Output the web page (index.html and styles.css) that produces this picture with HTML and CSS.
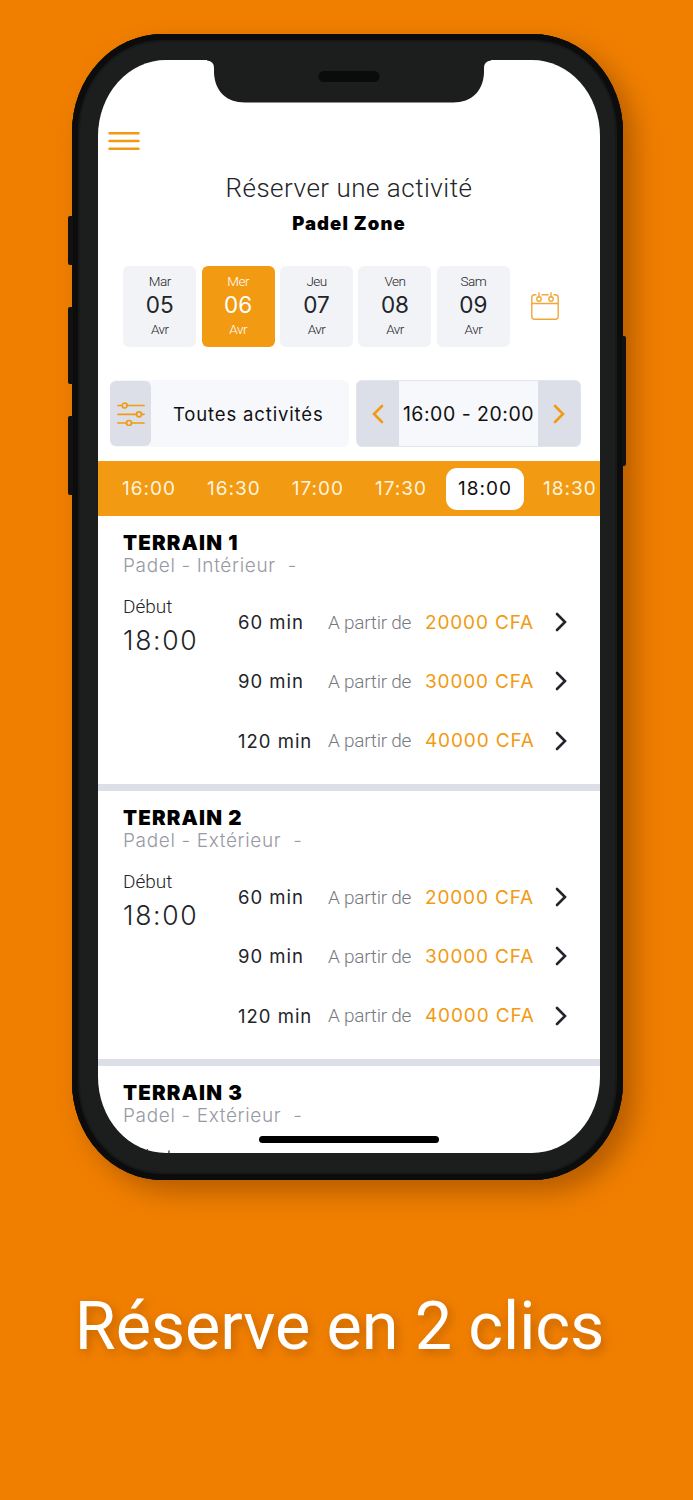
FILE: index.html
```html
<!DOCTYPE html>
<html lang="fr">
<head>
    <meta charset="UTF-8">
    <meta name="viewport" content="width=device-width, initial-scale=1.0">
    <title>Réserver une activité - Padel Zone</title>
    <link rel="stylesheet" href="styles.css">
</head>
<body>
    <div class="phone">
        <span class="side-button mute"></span>
        <span class="side-button volume-up"></span>
        <span class="side-button volume-down"></span>
        <span class="side-button power"></span>
        <svg class="notch" width="284" height="43" viewBox="0 0 284 43">
            <path d="M0 0H284V.5Q277 1 277 8V13C276 31 265 42.500 246 42.500H38C19 42.500 8 31 7 13V8Q7 1 0 .5Z" fill="#1c1d1d"/>
            <rect x="111.500" y="11" width="61" height="11" rx="5.500" fill="#0b0b0b"/>
        </svg>
        <div class="screen">
            <svg class="menu-icon" width="32" height="22" viewBox="0 0 32 22" stroke="#f19a12" stroke-width="2.500" stroke-linecap="round">
                <path d="M1.500 3.300H30.500M1.500 11H30.500M1.500 18.800H30.500"/>
            </svg>
            <h1>Réserver une activité</h1>
            <h2>Padel Zone</h2>

            <div class="days">
                <div class="day"><span>Mar</span><b>05</b><span>Avr</span></div>
                <div class="day active"><span>Mer</span><b>06</b><span>Avr</span></div>
                <div class="day"><span>Jeu</span><b>07</b><span>Avr</span></div>
                <div class="day"><span>Ven</span><b>08</b><span>Avr</span></div>
                <div class="day"><span>Sam</span><b>09</b><span>Avr</span></div>
                <svg class="calendar" width="28" height="28" viewBox="0 0 28 28" fill="none" stroke="#f3a73a" stroke-width="1.400">
                    <path d="M5.500 2.800H3.500A2.800 2.800 0 0 0 .8 5.500V24.500A2.700 2.700 0 0 0 3.500 27.200H24.500A2.700 2.700 0 0 0 27.200 24.500V5.500A2.800 2.800 0 0 0 24.500 2.800H22.500M10.500 2.800H17.500M.8 11.500H27.200M8 .3V5M20 .3V5"/>
                    <circle cx="8" cy="7" r="2.200"/>
                    <circle cx="20" cy="7" r="2.200"/>
                </svg>
            </div>

            <div class="filters">
                <div class="activity">
                    <div class="activity-icon">
                        <svg width="28" height="24" viewBox="0 0 28 24" fill="none" stroke="#f19a12" stroke-width="1.700" stroke-linecap="round">
                            <path d="M1 3.500H5.200M10.300 3.500H27M1 12.300H19.500M24.600 12.300H27M1 21H9.500M14.600 21H27"/>
                            <circle cx="7.700" cy="3.500" r="2.500"/>
                            <circle cx="22" cy="12.300" r="2.500"/>
                            <circle cx="12" cy="21" r="2.500"/>
                        </svg>
                    </div>
                    <span>Toutes activités</span>
                </div>
                <div class="range">
                    <svg width="12" height="20" viewBox="0 0 12 20"><path d="M10 2L2 10L10 18"/></svg>
                    <span>16:00 - 20:00</span>
                    <svg width="12" height="20" viewBox="0 0 12 20"><path d="M2 2L10 10L2 18"/></svg>
                </div>
            </div>

            <div class="hours">
                <span>16:00</span>
                <span>16:30</span>
                <span>17:00</span>
                <span>17:30</span>
                <span class="active">18:00</span>
                <span>18:30</span>
            </div>

            <section class="court">
                <h3>TERRAIN 1</h3>
                <p class="type">Padel - Intérieur&nbsp; -</p>
                <div class="slots">
                    <div class="start"><span>Début</span><b>18:00</b></div>
                    <div class="prices">
                        <div class="price"><span>60 min</span><small>A partir de</small><em>20000 CFA</em><svg width="12" height="20" viewBox="0 0 12 20"><path d="M2 2L10 10L2 18"/></svg></div>
                        <div class="price"><span>90 min</span><small>A partir de</small><em>30000 CFA</em><svg width="12" height="20" viewBox="0 0 12 20"><path d="M2 2L10 10L2 18"/></svg></div>
                        <div class="price"><span>120 min</span><small>A partir de</small><em>40000 CFA</em><svg width="12" height="20" viewBox="0 0 12 20"><path d="M2 2L10 10L2 18"/></svg></div>
                    </div>
                </div>
            </section>

            <section class="court">
                <h3>TERRAIN 2</h3>
                <p class="type">Padel - Extérieur&nbsp; -</p>
                <div class="slots">
                    <div class="start"><span>Début</span><b>18:00</b></div>
                    <div class="prices">
                        <div class="price"><span>60 min</span><small>A partir de</small><em>20000 CFA</em><svg width="12" height="20" viewBox="0 0 12 20"><path d="M2 2L10 10L2 18"/></svg></div>
                        <div class="price"><span>90 min</span><small>A partir de</small><em>30000 CFA</em><svg width="12" height="20" viewBox="0 0 12 20"><path d="M2 2L10 10L2 18"/></svg></div>
                        <div class="price"><span>120 min</span><small>A partir de</small><em>40000 CFA</em><svg width="12" height="20" viewBox="0 0 12 20"><path d="M2 2L10 10L2 18"/></svg></div>
                    </div>
                </div>
            </section>

            <section class="court">
                <h3>TERRAIN 3</h3>
                <p class="type">Padel - Extérieur&nbsp; -</p>
                <div class="slots">
                    <div class="start"><span>Début</span></div>
                </div>
            </section>
            <div class="home-bar"></div>
        </div>
    </div>
    <p class="slogan">Réserve en 2 clics</p>
</body>
</html>
```
FILE: styles.css
```css
* {
    box-sizing: border-box;
}
body {
    font-family: Inter, "Liberation Sans", sans-serif;
    margin: 0;
    padding-top: 34px;
    height: 1500px;
    overflow: hidden;
    background-color: #f07f00;
    color: #222428;
}
h1, h2, h3, p {
    margin: 0;
}

/* Phone frame */
.phone {
    position: relative;
    width: 551px;
    height: 1146px;
    margin-left: 72px;
    padding: 26px 23px 27px 26px;
    border-radius: 90px / 98px;
    background-color: #1c1d1d;
    box-shadow: inset 0 0 0 6px #0c0c0c, inset 0 0 0 8px #171818, 12px 12px 26px rgba(110, 50, 0, 0.45);
}
.side-button {
    position: absolute;
    width: 5px;
    left: -4px;
    background-color: #111;
    border-radius: 2px 0 0 2px;
}
.mute {
    top: 182px;
    height: 49px;
}
.volume-up {
    top: 273px;
    height: 77px;
}
.volume-down {
    top: 382px;
    height: 79px;
}
.power {
    left: 550px;
    top: 302px;
    height: 130px;
    width: 4px;
    border-radius: 0 2px 2px 0;
}
.notch {
    position: absolute;
    left: 135px;
    top: 26px;
    z-index: 1;
}
.screen {
    position: relative;
    height: 1093px;
    padding-top: 70px;
    overflow: hidden;
    border-radius: 68px / 76px;
    background-color: #fff;
}
.menu-icon {
    display: block;
    margin-left: 10px;
}
h1 {
    margin-top: 20px;
    font: 300 26px/32px Roboto, sans-serif;
    letter-spacing: 0.5px;
    text-align: center;
}
h2 {
    margin-top: 7px;
    font-size: 18.5px;
    line-height: 24px;
    font-weight: 900;
    letter-spacing: 1.1px;
    color: #000;
    text-align: center;
}

/* Day picker */
.days {
    display: flex;
    align-items: center;
    gap: 5.4px;
    margin: 31px 0 0 25.3px;
}
.day {
    width: 73px;
    height: 81px;
    padding-top: 6px;
    border-radius: 6px;
    background-color: #f2f3f7;
    text-align: center;
}
.day span {
    display: block;
    font: 300 13.5px/18px Roboto, sans-serif;
    letter-spacing: -0.5px;
}
.day b {
    display: block;
    font-size: 22.5px;
    line-height: 30px;
    font-weight: 400;
}
.day.active {
    background-color: #f19a12;
    color: #fff;
}
.calendar {
    margin: 0 0 2px 16px;
}

/* Filters */
.filters {
    display: flex;
    gap: 7px;
    margin: 33px 0 0 12px;
}
.activity {
    display: flex;
    align-items: center;
    width: 239px;
    height: 67px;
    border-radius: 6px;
    background-color: #f7f8fb;
    font-size: 18.5px;
    letter-spacing: 0.85px;
    color: #111;
}
.activity-icon {
    display: flex;
    align-items: center;
    justify-content: center;
    width: 41px;
    height: 65px;
    border-radius: 6px;
    background-color: #dcdfe8;
}
.activity span {
    margin-left: 22px;
}
.range {
    display: flex;
    align-items: center;
    justify-content: space-between;
    width: 225px;
    height: 67px;
    padding: 0 15px;
    border-radius: 6px;
    border: 1px solid #e3e5ec;
    background: linear-gradient(to right, #dcdfe8 42px, #f7f8fb 42px, #f7f8fb 181px, #dcdfe8 181px);
    font-size: 19.5px;
    letter-spacing: 0.5px;
    color: #111;
}
.range svg {
    fill: none;
    stroke: #f19a12;
    stroke-width: 2.6;
    stroke-linecap: round;
}

/* Hours bar */
.hours {
    display: flex;
    align-items: center;
    gap: 31px;
    height: 55px;
    margin-top: 14px;
    padding-left: 24px;
    background-color: #f19a12;
    font-size: 19px;
    letter-spacing: 1px;
    white-space: nowrap;
    color: #fff3df;
}
.hours .active {
    height: 42px;
    margin: 0 -12px;
    padding: 0 12px;
    border-radius: 11px;
    background-color: #fff;
    line-height: 42px;
    color: #111;
}

/* Courts */
.court {
    height: 275px;
    padding: 15px 0 0 25px;
    border-bottom: 7px solid #dcdfe8;
}
h3 {
    font-size: 20.5px;
    line-height: 24px;
    font-weight: 900;
    letter-spacing: 1.15px;
    color: #000;
}
.type {
    font-size: 19px;
    line-height: 22px;
    font-weight: 300;
    letter-spacing: 0.65px;
    color: #9799a3;
}
.slots {
    display: flex;
    margin-top: 17px;
}
.start {
    width: 115px;
}
.start span {
    display: block;
    font: 300 19px/26px Roboto, sans-serif;
}
.start b {
    display: block;
    margin-top: 3px;
    font-size: 26.5px;
    line-height: 34px;
    font-weight: 300;
    letter-spacing: 1.7px;
}
.prices {
    margin-top: -1.5px;
}
.price {
    display: grid;
    grid-template-columns: 90px 97px 130px 12px;
    align-items: center;
    height: 59.3px;
    font-size: 19px;
}
.price span {
    font-size: 18.5px;
    letter-spacing: 1px;
}
.price small {
    font: 300 19px Roboto, sans-serif;
    letter-spacing: -0.25px;
    color: #777980;
}
.price em {
    font-style: normal;
    letter-spacing: 0.85px;
    color: #f19a12;
}
.price svg {
    fill: none;
    stroke: #22262c;
    stroke-width: 2.6;
    stroke-linecap: round;
}
.home-bar {
    position: absolute;
    left: 161px;
    bottom: 10px;
    width: 180px;
    height: 7px;
    border-radius: 4px;
    background-color: #000;
}
.slogan {
    margin-top: 106px;
    padding-right: 14px;
    font: 400 66.5px/80px Roboto, sans-serif;
    letter-spacing: -0.1px;
    text-align: center;
    color: #fff;
    text-shadow: 3px 4px 10px rgba(110, 50, 0, 0.35);
}
```
